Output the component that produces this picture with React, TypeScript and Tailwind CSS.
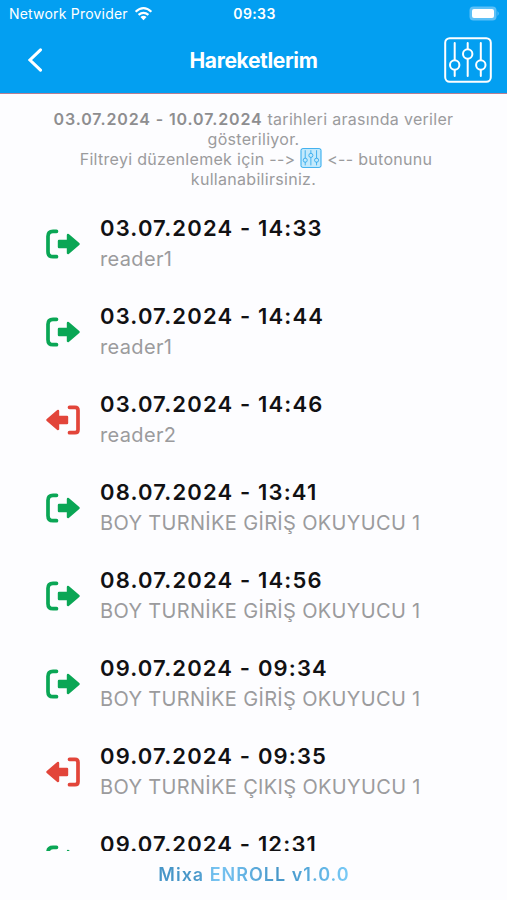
type Movement = { date: string; reader: string; type: 'in' | 'out' }

const movements: Movement[] = [
  { date: '03.07.2024 - 14:33', reader: 'reader1', type: 'in' },
  { date: '03.07.2024 - 14:44', reader: 'reader1', type: 'in' },
  { date: '03.07.2024 - 14:46', reader: 'reader2', type: 'out' },
  { date: '08.07.2024 - 13:41', reader: 'BOY TURNİKE GİRİŞ OKUYUCU 1', type: 'in' },
  { date: '08.07.2024 - 14:56', reader: 'BOY TURNİKE GİRİŞ OKUYUCU 1', type: 'in' },
  { date: '09.07.2024 - 09:34', reader: 'BOY TURNİKE GİRİŞ OKUYUCU 1', type: 'in' },
  { date: '09.07.2024 - 09:35', reader: 'BOY TURNİKE ÇIKIŞ OKUYUCU 1', type: 'out' },
  { date: '09.07.2024 - 12:31', reader: '', type: 'in' },
]

function FilterIcon({ className }: { className?: string }) {
  return (
    <svg viewBox="0 0 48 46" fill="none" stroke="currentColor" strokeWidth="2" className={className}>
      <rect x="1.2" y="1.2" width="45.6" height="43.6" rx="4.5" />
      <path d="M10.7 6v17M10.7 33v6M23.7 6v6M23.7 22v17M36.8 6v17M36.8 33v6" strokeLinecap="round" />
      <circle cx="10.7" cy="28" r="4.7" />
      <circle cx="23.7" cy="17" r="4.7" />
      <circle cx="36.8" cy="28" r="4.7" />
    </svg>
  )
}

function MovementIcon({ type }: { type: Movement['type'] }) {
  return (
    <svg
      viewBox="0 0 34 30"
      className={type === 'in' ? 'mb-px w-[34px] h-[30px] shrink-0 text-[#0aa655]' : 'mb-px w-[34px] h-[30px] shrink-0 text-[#e2453a] -scale-x-100'}
    >
      <path
        d={type === 'in' ? 'M10.5 2.300H7Q2 2.300 2 7.300V22.700Q2 27.700 7 27.700H10.500' : 'M10.5 2.300H5Q2 2.300 2 5.300V24.700Q2 27.700 5 27.700H10.500'}
        fill="none"
        stroke="currentColor"
        strokeWidth="3.700"
        strokeLinecap="round"
      />
      <path
        d="M13 12H22V6L32.500 15L22 24V18H13Z"
        fill="currentColor"
        stroke="currentColor"
        strokeWidth="2.400"
        strokeLinejoin="round"
      />
    </svg>
  )
}

function StatusBar() {
  return (
    <div className="grid grid-cols-3 items-center h-7 pb-px pl-[9px] pr-[7px]">
      <div className="flex items-center gap-[6px] text-[14px] tracking-[0.2px] whitespace-nowrap">
        <span>Network Provider</span>
        <svg viewBox="0 0 20 15" className="w-[19px] h-[15px] mb-px shrink-0">
          <path d="M1.700 5.600Q10 -1.800 18.300 5.600M4.800 9Q10 4.500 15.200 9" fill="none" stroke="currentColor" strokeWidth="2.300" />
          <path d="M6.800 11.200Q10 8.500 13.200 11.200L10 14.500Z" fill="currentColor" />
        </svg>
      </div>
      <div className="text-center text-[14px] font-semibold tracking-[0.4px]">09:33</div>
      <svg viewBox="0 0 31 15" className="w-[31px] h-[15px] mb-px justify-self-end">
        <rect x="0.500" y="0.500" width="27" height="14" rx="4" fill="#5cc0f7" />
        <rect x="3" y="3" width="22" height="9" rx="2" fill="#fff" />
        <path d="M28.500 5Q31 7.500 28.500 10Z" fill="#5cc0f7" />
      </svg>
    </div>
  )
}

export default function App() {
  return (
    <div className="flex flex-col h-screen overflow-hidden bg-[#fdfdff] font-['Inter',sans-serif]">
      <header className="h-[94px] shrink-0 bg-[#039ff1] border-b border-[#b77f92] text-white">
        <StatusBar />
        <div className="grid grid-cols-[64px_1fr_64px] items-center h-[64px]">
          <button className="pl-7">
            <svg viewBox="0 0 15 24" className="w-[15px] h-[24px]" fill="none" stroke="currentColor" strokeWidth="3" strokeLinecap="round">
              <path d="M12.500 1.800L2 12L12.500 22.200" />
            </svg>
          </button>
          <h1 className="pt-px text-center text-[21px] font-bold tracking-[-0.35px]">Hareketlerim</h1>
          <button className="pl-px">
            <FilterIcon className="w-[48px] h-[46px]" />
          </button>
        </div>
      </header>

      {/* Date range info */}
      <p className="mt-[15px] h-[80px] shrink-0 text-center text-[16px] leading-[20px] tracking-[0.3px] text-[#9b9b9d] whitespace-nowrap">
        <b className="font-semibold tracking-[0.87px] text-[#8e8e90]">03.07.2024 - 10.07.2024</b> tarihleri arasında veriler
        <br />
        gösteriliyor.
        <br />
        <span className="pl-[5px]">Filtreyi düzenlemek için --&gt;</span>{' '}
        <span className="inline-flex h-[20px] -mt-px align-top rounded-[3px] bg-[#c4eafc] text-[#2fa9ec]">
          <FilterIcon className="w-[22px] h-[20px]" />
        </span>{' '}
        &lt;-- butonunu
        <br />
        kullanabilirsiniz.
      </p>

      {/* Movement list */}
      <ul className="mt-[11px] h-[651px] shrink-0 overflow-hidden">
        {movements.map(m => (
          <li key={m.date} className="flex items-center gap-5 h-[88px] pl-[46px]">
            <MovementIcon type={m.type} />
            <div className="whitespace-nowrap">
              <div className="text-[22px] leading-[31px] font-semibold tracking-[1.15px] text-[#111113]">{m.date}</div>
              <div className="h-[31px] text-[20px] leading-[31px] tracking-[0.34px] text-[#9b9b9d]">{m.reader}</div>
            </div>
          </li>
        ))}
      </ul>

      <footer className="flex justify-center items-center h-[47px] pl-px shrink-0">
        <span className="bg-clip-text text-transparent bg-[linear-gradient(90deg,#4796c8_0%,#4796c8_20%,#78c4f2_30%,#6ab8e8_42%,#4796c8_62%,#4c9fd2_72%,#7accf8_100%)] text-[18px] font-semibold tracking-[1px]">
          Mixa ENROLL v1.0.0
        </span>
      </footer>
    </div>
  )
}
